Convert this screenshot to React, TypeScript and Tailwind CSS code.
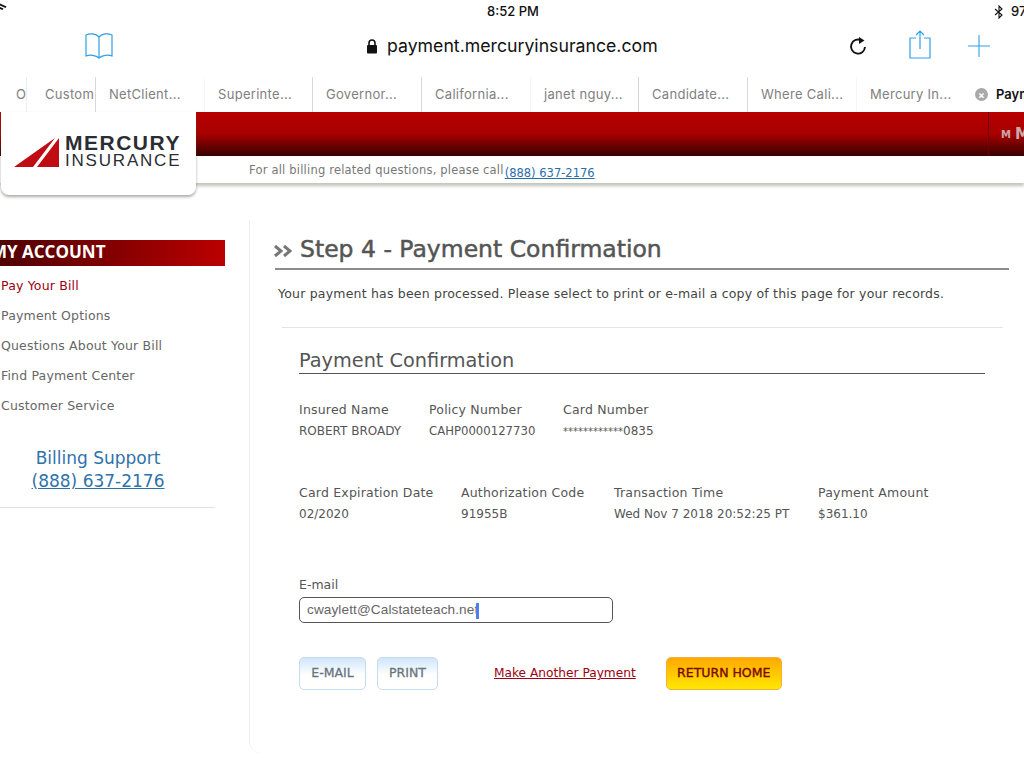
import React from "react";

const tabs = [
  { t: "Or", w: "w-[27px]", sep: "border-[#ececec]", cls: "pl-[16px]" },
  { t: "Custom", w: "w-[69px]", sep: "border-[#d8d8d8]", cls: "pl-[18px]" },
  { t: "NetClient...", w: "w-[109px]", sep: "border-[#f6f6f6]", cls: "pl-[13px]" },
  { t: "Superinte...", w: "w-[108px]", sep: "border-[#d8d8d8]", cls: "pl-[13px]" },
  { t: "Governor...", w: "w-[109px]", sep: "border-[#d8d8d8]", cls: "pl-[13px]" },
  { t: "California...", w: "w-[109px]", sep: "border-[#f6f6f6]", cls: "pl-[13px]" },
  { t: "janet nguy...", w: "w-[108px]", sep: "border-[#d8d8d8]", cls: "pl-[13px]" },
  { t: "Candidate...", w: "w-[109px]", sep: "border-[#d8d8d8]", cls: "pl-[13px]" },
  { t: "Where Cali...", w: "w-[109px]", sep: "border-[#f6f6f6]", cls: "pl-[13px]" },
  { t: "Mercury In...", w: "w-[109px]", sep: "border-transparent", cls: "pl-[13px]" },
];

const ui = "font-['Inter','Liberation_Sans',sans-serif]";
const page = "font-['DejaVu_Sans','Liberation_Sans',sans-serif]";

function Field({ label, value, className = "" }: { label: string; value: React.ReactNode; className?: string }) {
  return (
    <div className={className}>
      <div className="h-[22px] whitespace-nowrap text-[12.5px] leading-[21px] tracking-[0.2px] text-[#555]">{label}</div>
      <div className="h-[21px] whitespace-nowrap text-[12px] leading-[21px] text-[#555]">{value}</div>
    </div>
  );
}

export default function App() {
  return (
    <div className="relative flex h-[768px] w-[1024px] flex-col overflow-hidden bg-white">
      {/* status bar */}
      <div className={`flex h-[22px] shrink-0 items-center pt-[1px] ${ui} text-[13px] font-medium text-[#111]`}>
        <svg width="7" height="10" viewBox="0 0 7 10" className="mb-[7px] shrink-0">
          <path d="M0 0.500 L6.500 3.500 L5.500 5 L0 2.500 Z M0 4 L3.500 5.500 L2.500 7 L0 6 Z" fill="#111" />
        </svg>
        <span className="ml-[478px] w-[56px] shrink-0 whitespace-nowrap text-center">8:52 PM</span>
        <svg width="10" height="14" viewBox="0 0 10 14" className="ml-[453px] shrink-0" fill="none" stroke="#111" strokeWidth="1.1">
          <path d="M1 4 L8 10 L5 13 V1 L8 4 L1 10" />
        </svg>
        <span className="ml-[7px] whitespace-nowrap">97%</span>
      </div>

      {/* toolbar */}
      <div className="flex h-[54px] shrink-0 items-center pb-[6px]">
        <svg width="30" height="28" viewBox="0 0 30 28" className="ml-[84px] shrink-0" fill="none" stroke="#2f9fe6" strokeWidth="1.2">
          <path d="M15 5 C12 1.500 6 1 2 3 V24 C6 22.500 12 23 15 26 C18 23 24 22.500 28 24 V3 C24 1 18 1.500 15 5 Z M15 5 V26" />
        </svg>
        <svg width="12" height="15" viewBox="0 0 12 15" className="ml-[252px] shrink-0" fill="#111">
          <rect x="1" y="6" width="10" height="8.500" rx="1" />
          <path d="M3 7 V4 a3 3 0 0 1 6 0 V7" fill="none" stroke="#111" strokeWidth="1.6" />
        </svg>
        <span className={`ml-[9px] w-[270px] shrink-0 whitespace-nowrap ${ui} text-[17.7px] text-[#111]`}>payment.mercuryinsurance.com</span>
        <svg width="20" height="20" viewBox="0 0 20 20" className="ml-[191px] shrink-0" fill="none" stroke="#111" strokeWidth="1.9">
          <path d="M13.500 4.500 A7 7 0 1 0 17 11" />
          <path d="M11 1 L16.500 4.500 L11 8 Z" fill="#111" stroke="none" />
        </svg>
        <svg width="24" height="30" viewBox="0 0 24 30" className="ml-[40px] mb-[2px] shrink-0" fill="none" stroke="#2f9fe6" strokeWidth="1.2">
          <path d="M8 8 H2 V28 H22 V8 H16 M12 19 V1 M8 5 L12 1 L16 5" />
        </svg>
        <svg width="22" height="22" viewBox="0 0 22 22" className="ml-[36px] shrink-0" stroke="#2f9fe6" strokeWidth="1.1">
          <path d="M11 0 V22 M0 11 H22" />
        </svg>
      </div>

      {/* tabs */}
      <div className={`flex h-[36px] shrink-0 pt-[1px] ${ui} text-[13px] tracking-[0.3px] text-[#808080]`}>
        {tabs.map((t) => (
          <div key={t.t} className={`flex ${t.w} shrink-0 items-center overflow-hidden whitespace-nowrap border-r ${t.sep} ${t.cls}`}>
            {t.t}
          </div>
        ))}
        <div className="flex flex-1 items-center overflow-hidden whitespace-nowrap pl-[9px] font-semibold tracking-normal text-[#111]">
          <span className="mr-[8px] flex h-[13px] w-[13px] shrink-0 items-center justify-center rounded-full bg-[#a8a8a8] text-[10px] font-bold leading-none text-white">×</span>
          Payment
        </div>
      </div>

      {/* red band */}
      <div className="flex h-[44px] shrink-0 justify-end bg-gradient-to-b from-[#b80000] via-[#a80000] to-[#3a0000]">
        <div className={`flex w-[36px] items-center overflow-hidden whitespace-nowrap border-l border-[#6a0000] pl-[12px] ${page} text-[15px] font-bold text-[#c9a9a9]`}>
          <span className="mr-[4px] text-[10px]">M</span>M
        </div>
      </div>

      {/* sub bar */}
      <div className={`flex h-[27px] shrink-0 items-center pl-[249px] shadow-[0_3px_3px_rgba(110,110,85,0.4)] ${page} text-[11.500px] text-[#777]`}>
        <span className="mt-[3px] whitespace-nowrap tracking-[0.2px]">For all billing related questions, please call</span>
        <a className="ml-[1px] mt-[9px] whitespace-nowrap text-[#2a6fa8] underline">(888) 637-2176</a>
      </div>

      {/* logo card */}
      <div className="absolute left-[1px] top-[112px] flex h-[83px] w-[195px] items-start rounded-b-[8px] bg-white pl-[13px] pt-[21px] shadow-[0_2px_3px_rgba(70,70,60,0.45)]">
        <svg width="46" height="32" viewBox="0 0 46 32" className="mt-[3px] shrink-0">
          <path d="M0 31 L41 2 L19 31 Z M23 31 L45 2 V31 Z" fill="#c00d14" />
        </svg>
        <div className="ml-[5px] font-['Liberation_Sans',sans-serif] text-[#2a2d33]">
          <div className="h-[19px] text-[21px] font-bold leading-[19px] tracking-[1.5px]">MERCURY</div>
          <div className="mt-[1px] h-[16px] text-[17px] leading-[16px] tracking-[1.8px]">INSURANCE</div>
        </div>
      </div>

      {/* body */}
      <div className={`flex min-h-0 flex-1 pt-[37px] ${page}`}>
        <aside className="ml-[-13px] w-[238px] shrink-0 pt-[20px]">
          <div className="flex h-[26px] items-center whitespace-nowrap bg-gradient-to-r from-[#4a0000] to-[#bb0000] pb-[2px] pl-[4px] font-['Open_Sans',sans-serif] text-[17px] font-bold text-white">MY ACCOUNT</div>
          <ul className="mt-[5px] pl-[14px] text-[12.500px] tracking-[0.17px] text-[#666]">
            <li className="flex h-[30px] items-center text-[#9a0010]">Pay Your Bill</li>
            <li className="flex h-[30px] items-center">Payment Options</li>
            <li className="flex h-[30px] items-center">Questions About Your Bill</li>
            <li className="flex h-[30px] items-center">Find Payment Center</li>
            <li className="flex h-[30px] items-center">Customer Service</li>
          </ul>
          <div className="ml-[13px] mt-[26px] w-[215px] border-b border-[#e2e2e2] pb-[14px] pr-[19px] text-center text-[17px] leading-[23px] text-[#2f72ab]">
            <div>Billing Support</div>
            <a className="underline">(888) 637-2176</a>
          </div>
        </aside>

        <main className="ml-[24px] mb-[15px] flex-1 rounded-bl-[12px] border-l border-[#efefef] pl-[25px]">
          <div className="mr-[15px] mt-[15px] flex h-[35px] items-center border-b-2 border-[#8c8c8c] pb-[4px]">
            <svg width="18" height="14" viewBox="0 0 18 14" className="ml-[-1px] mt-[3px] shrink-0" fill="none" stroke="#777" strokeWidth="3">
              <path d="M1 2 L7 7 L1 12 M10 2 L16 7 L10 12" />
            </svg>
            <h1 className="ml-[8px] whitespace-nowrap text-[23.500px] text-[#555] [-webkit-text-stroke:0.5px_#555]">Step 4 - Payment Confirmation</h1>
          </div>
          <p className="ml-[3px] mt-[14px] whitespace-nowrap text-[12.500px] leading-[20px] tracking-[0.2px] text-[#444]">Your payment has been processed. Please select to print or e-mail a copy of this page for your records.</p>
          <div className="ml-[7px] mr-[21px] mt-[23px] border-t border-[#e4e4e4] pl-[17px]">
            <div className="mr-[18px] mt-[20px] h-[26px] border-b border-[#555] text-[19.300px] leading-[25px] text-[#555]">Payment Confirmation</div>

            <div className="mt-[25px] flex">
              <Field className="w-[130px]" label="Insured Name" value="ROBERT BROADY" />
              <Field className="w-[134px]" label="Policy Number" value={<span className="text-[11.7px]">CAHP0000127730</span>} />
              <Field
                label="Card Number"
                value={
                  <>
                    <span className="text-[10px]">************</span>0835
                  </>
                }
              />
            </div>

            <div className="mt-[40px] flex">
              <Field className="w-[162px]" label="Card Expiration Date" value="02/2020" />
              <Field className="w-[153px]" label="Authorization Code" value="91955B" />
              <Field className="w-[204px]" label="Transaction Time" value="Wed Nov 7 2018 20:52:25 PT" />
              <Field label="Payment Amount" value="$361.10" />
            </div>

            <div className="mt-[50px] h-[20px] text-[12.500px] leading-[20px] text-[#555]">E-mail</div>
            <div className="mt-[2px] flex h-[26px] w-[314px] items-center rounded-[5px] border border-[#555] pl-[7px] pt-[1px] font-['Liberation_Sans',sans-serif] text-[13.600px] tracking-[0.1px] text-[#666]">
              cwaylett@Calstateteach.net
              <span className="ml-[-2px] h-[16px] w-[3px] bg-[#4d7ff0]" />
            </div>

            <div className="mt-[34px] flex items-center">
              <button className="h-[33px] w-[67px] rounded-[5px] border border-[#c3dcf0] bg-gradient-to-b from-[#d0e5fb] via-white via-55% to-white text-[12.500px] text-[#68747c] [-webkit-text-stroke:0.3px_#68747c]">E-MAIL</button>
              <button className="ml-[11px] h-[33px] w-[61px] rounded-[5px] border border-[#c3dcf0] bg-gradient-to-b from-[#d0e5fb] via-white via-55% to-white text-[12.500px] text-[#68747c] [-webkit-text-stroke:0.3px_#68747c]">PRINT</button>
              <a className="ml-[56px] whitespace-nowrap text-[12.200px] text-[#9a0010] underline">Make Another Payment</a>
              <button className="ml-[30px] h-[33px] w-[116px] rounded-[5px] border border-[#f0b040] bg-gradient-to-b from-[#ffa800] to-[#ffe800] text-[12.500px] text-[#7a0a00] [-webkit-text-stroke:0.4px_#7a0a00]">RETURN HOME</button>
            </div>
          </div>
        </main>
      </div>
    </div>
  );
}
